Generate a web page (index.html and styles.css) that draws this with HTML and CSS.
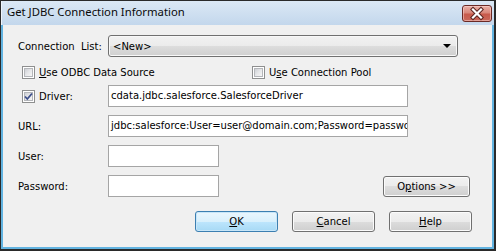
FILE: index.html
```html
<!DOCTYPE html>
<html>
<head>
<meta charset="utf-8">
<link rel="stylesheet" href="styles.css">
</head>
<body>
<div class="window">
  <div class="titlebar">
    <span class="title">Get JDBC Connection Information</span>
    <div class="close">
      <svg width="30" height="17" viewBox="0 0 30 17">
        <path d="M11 4.5 L19 12.5 M19 4.5 L11 12.5" stroke="#5a2420" stroke-width="4.2" stroke-linecap="square" fill="none"/>
        <path d="M11 4.5 L19 12.5 M19 4.5 L11 12.5" stroke="#ffffff" stroke-width="2.2" stroke-linecap="square" fill="none"/>
      </svg>
    </div>
  </div>
  <div class="content">
    <div class="row r1">
      <span class="lbl">Connection&nbsp; List:</span>
      <div class="combo"><span class="combo-text">&lt;New&gt;</span><span class="arrow"></span></div>
    </div>
    <div class="row r2">
      <div class="chk odbc"><span class="box"></span><span><u>U</u>se ODBC Data Source</span></div>
      <div class="chk"><span class="box"></span><span>U<u>s</u>e Connection Pool</span></div>
    </div>
    <div class="row r3">
      <div class="chk lbl-chk"><span class="box checked">
        <svg width="11" height="11" viewBox="0 0 11 11"><path d="M2 5.5 L4.3 8 L9 2.5" stroke="#3d4f8a" stroke-width="1.8" fill="none"/></svg>
      </span><span>Driver:</span></div>
      <div class="field w300">cdata.jdbc.salesforce.SalesforceDriver</div>
    </div>
    <div class="row r4">
      <span class="lbl">URL:</span>
      <div class="field w300">jdbc:salesforce:User=user@domain.com;Password=password;</div>
    </div>
    <div class="row r5">
      <span class="lbl">User:</span>
      <div class="field w111"></div>
    </div>
    <div class="row r6">
      <span class="lbl">Password:</span>
      <div class="field w111"></div>
      <div class="btn options">O<u>p</u>tions &gt;&gt;</div>
    </div>
    <div class="row r7">
      <div class="btn default"><u>O</u>K</div>
      <div class="btn"><u>C</u>ancel</div>
      <div class="btn"><u>H</u>elp</div>
    </div>
  </div>
</div>
</body>
</html>
```
FILE: styles.css
```css
* { box-sizing: border-box; }
html, body { margin: 0; padding: 0; background: #ffffff; }
body { font-family: "DejaVu Sans", sans-serif; font-size: 10px; color: #000; }

.window {
  width: 496px;
  height: 251px;
  background: #62b3e0;
  border-style: solid;
  border-color: #2a2a2a;
  border-width: 1px 2px 2px 1px;
  display: flex;
  flex-direction: column;
}

.titlebar {
  height: 24px;
  flex: none;
  display: flex;
  align-items: flex-start;
  background: linear-gradient(#dbe8f5, #c3d7ec);
  border-left: 1px solid #eef4fb;
}
.title {
  font-family: "Noto Sans", sans-serif;
  font-size: 11.3px;
  color: #0a0a0a;
  padding: 3px 0 0 5px;
  line-height: 16px;
}
.close {
  margin: 4px 2px 0 auto;
  width: 30px;
  height: 17px;
  border: 1px solid #6b2a25;
  border-radius: 3px;
  background: linear-gradient(#eab0a6 0%, #d9877a 45%, #c85a4b 55%, #c9685a 100%);
  box-shadow: inset 0 0 0 1px rgba(255,220,215,0.5);
  position: relative;
}
.close svg { position: absolute; left: -1px; top: -1px; }

.content {
  flex: 1;
  margin: 0 2px 2px 2px;
  background: #f0f0f0;
  padding: 10px 0 0 15px;
  display: flex;
  flex-direction: column;
}

.row { display: flex; align-items: center; }
.r1 { height: 22px; }
.r2 { height: 13px; margin-top: 9px; padding-left: 4px; }
.r3 { height: 22px; margin-top: 6px; }
.r4, .r5, .r6 { height: 22px; margin-top: 8px; }
.r7 { height: 21px; margin-top: 14px; padding-left: 177px; gap: 14px; }

.lbl { width: 90px; flex: none; }

.combo {
  width: 350px;
  height: 22px;
  border: 1px solid #707070;
  border-radius: 3px;
  background: linear-gradient(#f2f2f2 0%, #ebebeb 50%, #dddddd 50%, #cfcfcf 100%);
  box-shadow: inset 0 0 0 1px #f8f8f8;
  display: flex;
  align-items: center;
  padding-left: 4px;
}
.combo-text { flex: 1; }
.arrow {
  width: 0; height: 0;
  border-left: 4px solid transparent;
  border-right: 4px solid transparent;
  border-top: 4px solid #000;
  margin-right: 6px;
}

.chk { display: flex; align-items: center; gap: 4px; }
.odbc { width: 230px; flex: none; }
.lbl-chk { width: 90px; flex: none; padding-left: 4px; }
.box {
  width: 13px;
  height: 13px;
  flex: none;
  border: 1px solid #8e8f8f;
  background: #fff;
  position: relative;
}
.box::before {
  content: "";
  position: absolute;
  left: 1px; top: 1px; right: 1px; bottom: 1px;
  background: linear-gradient(135deg, #cdd0d5 0%, #e6e7e9 50%, #f6f6f6 100%);
  border: 1px solid #b4b6ba;
}
.box.checked svg { position: absolute; left: 0; top: 0; z-index: 1; }

.field {
  height: 22px;
  border: 1px solid #a5a5a5;
  background: #fff;
  padding-left: 2px;
  line-height: 20px;
  white-space: nowrap;
  overflow: hidden;
}
.w300 { width: 300px; }
.w111 { width: 111px; }

.btn {
  width: 83px;
  height: 21px;
  border: 1px solid #707070;
  border-radius: 3px;
  background: linear-gradient(#f2f2f2 0%, #ebebeb 50%, #dddddd 50%, #cfcfcf 100%);
  box-shadow: inset 0 0 0 1px #fbfbfb;
  display: flex;
  align-items: center;
  justify-content: center;
  flex: none;
}
.btn.default {
  border-color: #3c7fb1;
  background: linear-gradient(#eaf6fd 0%, #d9f0fc 50%, #bee6fd 50%, #a7d9f5 100%);
  box-shadow: inset 0 0 0 1px #c8e6f8;
}
.options { width: 87px; margin-left: 164px; }
```
